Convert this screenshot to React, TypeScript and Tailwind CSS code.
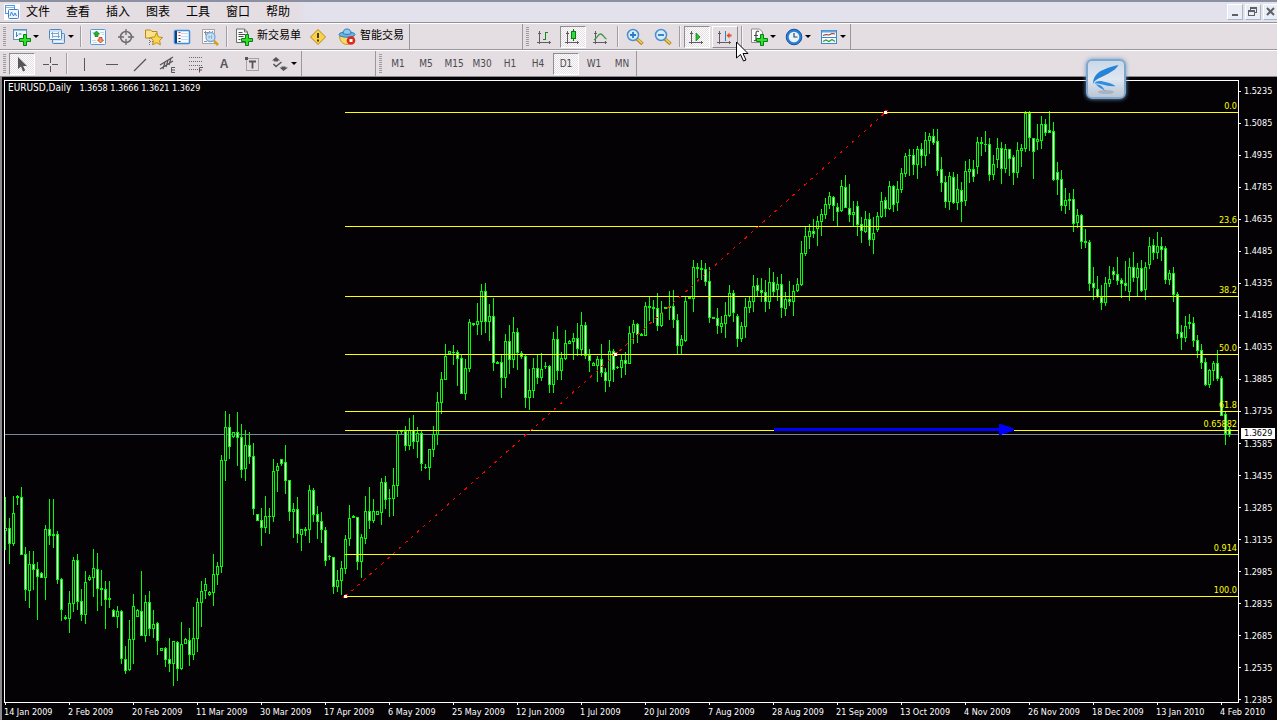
import React from "react";

type Candle = { high: number; top: number; bottom: number; low: number; down: boolean };

const STEP = 4;
const FIRST_X = 5;

/* high, body top, body bottom, low, direction (u = up, d = down); one entry per trading day */
const SERIES = `
497 528 530 549 u|518 528 543 563 d|496 513 543 545 u|495 496 497 504 u|487 497 554 554 d|547 554 589 600 d|551 564 590 607 u|551 564 569 589 d
562 569 576 619 d|572 573 577 577 d|525 529 577 599 u|499 529 535 544 d|499 534 535 547 u|531 534 579 583 d|578 579 609 620 d|615 617 618 619 u
591 603 618 632 u|557 560 603 611 u|554 560 601 609 d|589 601 614 620 d|571 582 614 623 u|575 577 579 580 u|549 568 577 596 u|553 569 588 610 d
570 588 589 605 u|581 589 599 628 d|581 598 599 607 u|609 610 616 616 d|606 611 616 627 u|610 611 658 663 d|646 659 670 673 d|620 639 669 670 u
594 606 639 663 u|609 610 616 616 u|571 611 635 635 d|595 602 635 641 u|591 602 628 635 d|610 624 628 637 u|622 623 640 654 d|648 648 650 650 u
647 648 659 666 d|638 659 663 671 d|641 641 663 685 u|641 642 668 680 d|622 644 668 669 u|638 639 643 643 u|628 640 654 665 d|607 638 654 659 u
598 602 638 651 u|581 591 602 626 u|578 584 590 598 u|591 592 594 595 u|554 574 592 605 u|562 566 574 584 u|455 460 566 572 u|411 427 460 480 u
414 427 446 458 d|432 432 436 437 u|412 432 437 465 d|424 437 469 477 d|430 445 468 480 u|432 445 456 463 d|443 456 508 514 d|514 514 520 520 d
508 520 527 545 d|496 516 527 532 u|508 516 516 533 u|459 471 516 521 u|463 466 470 491 u|459 459 463 465 d|445 462 480 493 d|480 480 511 520 d
503 509 511 537 u|497 509 533 542 d|529 529 534 550 u|527 529 530 535 u|485 490 529 542 u|488 490 514 521 d|506 514 521 538 d|512 521 529 542 d
527 530 560 565 d|555 556 556 559 u|557 557 586 593 d|570 580 586 591 u|561 568 580 594 u|535 539 568 573 u|505 518 538 545 u|515 516 517 517 u
517 517 561 569 d|534 537 561 577 u|496 511 538 543 u|487 511 520 528 d|499 511 520 522 u|511 511 514 514 u|478 482 512 524 u|476 482 499 508 d
489 498 498 516 u|468 485 498 515 u|431 434 485 496 u|430 431 431 433 u|426 431 445 450 d|418 430 445 449 u|415 430 441 448 d|427 433 441 457 u
430 433 463 470 d|464 467 467 468 u|449 449 467 479 u|426 434 449 456 u|392 402 434 444 u|372 379 402 413 u|344 356 379 379 u|351 351 353 353 u
345 352 352 364 u|350 352 358 385 d|355 358 393 393 d|359 368 393 399 u|319 322 368 371 u|323 323 324 325 u|303 321 324 334 u|284 291 321 334 u
283 291 321 332 d|304 316 321 340 u|298 316 362 370 d|361 362 363 363 u|354 362 377 397 d|334 341 377 387 u|325 341 359 373 d|317 332 359 367 u
328 332 352 369 d|351 353 356 358 d|355 356 397 407 d|369 390 397 409 u|358 368 390 397 u|354 368 377 383 d|353 369 377 380 u|362 366 366 368 u
365 366 384 392 d|332 339 384 392 u|326 339 370 379 d|352 358 370 379 u|330 343 358 359 u|340 341 343 343 u|333 338 341 359 u|323 338 348 355 d
312 325 349 355 u|322 325 355 358 d|349 355 360 371 d|362 363 365 365 u|356 359 365 381 u|344 359 372 376 d|368 372 380 391 d|340 351 380 386 u
349 351 369 381 d|366 367 367 368 u|355 360 367 377 u|352 360 363 374 d|326 333 363 363 u|320 324 332 343 u|323 324 334 342 d|333 334 335 335 u
302 306 335 335 u|297 306 307 320 u|300 307 308 322 u|293 308 325 330 d|301 313 325 326 u|307 307 308 308 u|291 306 307 319 u|290 306 319 327 d
314 320 345 353 d|335 339 345 353 u|296 301 340 341 u|297 297 298 298 u|260 267 298 311 u|263 267 268 277 u|260 268 269 279 u|263 269 281 285 d
267 281 317 322 d|317 317 318 318 u|308 318 325 333 d|316 323 326 332 u|302 315 323 337 u|285 293 315 316 u|290 293 312 321 d|314 316 338 346 d
322 326 338 341 u|298 307 326 337 u|296 301 307 312 u|275 286 301 311 u|278 285 290 296 d|278 290 292 301 d|280 292 301 311 d|268 282 301 308 u
272 282 291 296 d|277 284 289 300 u|274 284 307 317 d|292 299 308 315 u|281 299 301 305 d|285 291 301 315 u|278 284 290 291 u|241 253 284 285 u
227 236 253 255 u|224 231 236 248 u|219 231 233 237 d|216 221 228 245 u|209 214 221 235 u|198 204 214 218 u|192 196 204 208 u|196 197 205 220 d
203 207 211 225 d|180 186 210 211 u|175 187 207 207 d|184 208 214 221 d|201 212 214 225 u|201 206 224 235 d|217 224 230 242 d|211 219 231 232 u
213 219 239 245 d|217 233 239 253 u|212 216 229 231 u|192 201 216 217 u|197 200 208 216 d|181 186 208 209 u|185 186 204 211 d|181 189 202 210 u
168 173 189 192 u|153 156 173 176 u|149 155 155 175 u|149 155 164 174 d|146 149 164 178 u|143 149 155 167 d|132 140 155 165 u|133 136 140 153 u
129 136 142 144 d|129 141 170 175 d|157 169 182 191 d|176 182 201 207 d|172 176 201 209 u|172 177 202 203 d|174 189 202 209 u|182 190 201 221 d
161 171 200 205 u|159 169 171 182 u|160 169 176 181 d|137 142 166 173 u|137 142 143 155 u|131 144 144 151 u|138 144 174 180 d|155 164 174 179 u
138 148 159 167 u|142 148 168 183 d|144 149 168 172 u|149 149 158 175 d|155 157 172 184 d|142 150 172 177 u|144 148 150 166 u|111 113 148 151 u
111 113 137 150 d|138 138 151 178 d|124 139 141 149 u|116 124 140 148 u|119 124 132 135 d|111 130 132 132 d|122 131 179 180 d|162 172 179 194 d
170 179 205 210 d|188 200 205 213 u|193 199 200 209 u|189 199 223 231 d|209 215 222 227 u|214 215 241 248 d|229 241 242 247 u|240 242 283 290 d
267 283 287 299 d|276 289 296 297 d|285 297 302 309 d|277 283 302 305 u|266 279 283 286 u|267 271 274 279 d|257 274 280 284 d|278 280 283 297 d
261 283 285 290 d|258 267 291 300 u|252 267 277 281 d|263 268 277 295 u|260 268 290 291 d|262 267 289 299 u|237 246 264 268 u|239 245 252 259 d
232 246 252 258 u|237 246 249 260 d|246 248 279 283 d|270 273 279 284 u|267 273 294 301 d|292 294 333 338 d|325 332 337 349 d|316 326 337 341 u
314 322 323 328 u|317 323 340 346 d|335 340 350 357 d|344 350 362 368 d|358 362 384 385 d|369 370 384 387 u|361 363 370 380 u|350 363 378 380 d
376 378 415 415 d|411 414 433 444 d|427 429 434 436 d`;

const CANDLES: Candle[] = SERIES.trim()
  .split(/[|\n]/)
  .map((row) => {
    const [high, top, bottom, low, dir] = row.trim().split(" ");
    return { high: +high, top: +top, bottom: +bottom, low: +low, down: dir === "d" };
  });

const box = (x: number, y: number, w: number, h: number) => `M${x} ${y}h${w}v${h}h${-w}z`;

const LIME_PATH = CANDLES.map((c, i) => {
  const x = FIRST_X + i * STEP;
  return box(x, c.high, 1, c.low - c.high + 1) + box(x - 1, c.top, 3, c.bottom - c.top + 1);
}).join("");

const corePath = (down: boolean) =>
  CANDLES.map((c, i) =>
    c.down === down && c.bottom - c.top > 1
      ? box(FIRST_X + i * STEP, c.top + 1, 1, c.bottom - c.top - 1)
      : ""
  ).join("");

const UP_CORES = corePath(false);
const DOWN_CORES = corePath(true);

const PLOT = { left: 4, top: 80, width: 1235, height: 623 };

const LEVELS = [
  { label: "0.0", y: 112 },
  { label: "23.6", y: 226 },
  { label: "38.2", y: 296 },
  { label: "50.0", y: 354 },
  { label: "61.8", y: 411 },
  { label: "0.65882", y: 430 },
  { label: "0.914", y: 554 },
  { label: "100.0", y: 596 },
];

const PRICES = Array.from({ length: 20 }, (_, i) => (1.5235 - i * 0.015).toFixed(4));

const DATES = [
  "14 Jan 2009", "2 Feb 2009", "20 Feb 2009", "11 Mar 2009", "30 Mar 2009", "17 Apr 2009", "6 May 2009",
  "25 May 2009", "12 Jun 2009", "1 Jul 2009", "20 Jul 2009", "7 Aug 2009", "28 Aug 2009", "21 Sep 2009",
  "13 Oct 2009", "4 Nov 2009", "26 Nov 2009", "18 Dec 2009", "13 Jan 2010", "4 Feb 2010",
];

const MENUS = ["文件", "查看", "插入", "图表", "工具", "窗口", "帮助"];
const PERIODS = ["M1", "M5", "M15", "M30", "H1", "H4", "D1", "W1", "MN"];

/* ---------- icons ---------- */

function Icon({ children }: { children: React.ReactNode }) {
  return (
    <svg viewBox="0 0 18 18" className="h-[18px] w-[18px] shrink-0" fill="none" aria-hidden="true">
      {children}
    </svg>
  );
}

const Plus = () => (
  <path d="M10.500 6.500h3v4h4v3h-4v4h-3v-4h-4v-3h4z" fill="#2fe02f" stroke="#0b7d14" strokeWidth="1" />
);

const NewChartIcon = () => (
  <Icon>
    <rect x="0.5" y="1.5" width="13" height="10" fill="#f2f8fd" stroke="#5b93c4" />
    <path d="M1 2.5h12" stroke="#8fbbe0" />
    <path d="M3.5 4v5M5.5 6h3M3 7.5h2" stroke="#4d7ea8" />
    <Plus />
  </Icon>
);
const ProfilesIcon = () => (
  <Icon>
    <rect x="4.5" y="5.5" width="12" height="10" rx="1" fill="#cfe3f4" stroke="#4e88bd" />
    <rect x="1.5" y="1.5" width="12" height="10" rx="1" fill="#f2f8fd" stroke="#4e88bd" />
    <path d="M2 3h11" stroke="#a9cdec" />
    <path d="M4.500 4v6M10.500 4v6M3 5.500h8M4 8.500h8" stroke="#7fa9cc" />
    <path d="M6 13.500h9" stroke="#f4f9fd" />
  </Icon>
);
const MarketWatchIcon = () => (
  <Icon>
    <rect x="1.500" y="1.500" width="15" height="15" rx="1" fill="#f8fbfd" stroke="#4f9fdc" />
    <path d="M3 4.500h3M3 12.500h4M4 14.500h4M11 4.500h4M13 6.500h2" stroke="#c8d4de" />
    <path d="M7.500 3l3 3H9v2.500H6V6H4.500z" fill="#25b425" stroke="#0c7a12" strokeWidth="0.700" />
    <path d="M11.500 15l-3-3H10V9.500h3V12h1.500z" fill="#f4946c" stroke="#d2431b" strokeWidth="0.900" />
  </Icon>
);
const TargetIcon = () => (
  <Icon>
    <circle cx="9" cy="9" r="5.500" stroke="#6b6b70" strokeWidth="1.500" />
    <path d="M9 1v6M9 11v6M1 9h6M11 9h6" stroke="#6b6b70" strokeWidth="1.300" />
  </Icon>
);
const NavigatorIcon = () => (
  <Icon>
    <path d="M0.500 2h5l1.500 1.500h5V10H0.500z" fill="#fbe28a" stroke="#b58b1c" />
    <path d="M4.500 10v7M5 13.500h3" stroke="#777" strokeDasharray="1 1" />
    <path d="M11.500 5l2 4 4.200.5-3.100 3 .8 4.300-3.900-2.100-3.900 2.100.8-4.300-3-3 4.200-.5z" fill="#fbd650" stroke="#b8860b" strokeWidth="0.900" />
  </Icon>
);
const DataWindowIcon = () => (
  <Icon>
    <rect x="1.500" y="2.500" width="15" height="13" rx="1" fill="#f7fbff" stroke="#3e8fd6" strokeWidth="1.500" />
    <path d="M3 3v12" stroke="#123e78" strokeWidth="2" />
    <path d="M8 5.500h7M8 8.500h7M8 11.500h7" stroke="#c6dcee" />
    <path d="M5.500 4.500h2M5.500 7.500h2" stroke="#ee3030" />
    <path d="M5.500 10.500h2M5.500 13.500h2" stroke="#333" />
  </Icon>
);
const TesterIcon = () => (
  <Icon>
    <rect x="1.500" y="1.500" width="12" height="14" fill="#fafafa" stroke="#a5a5aa" />
    <path d="M3 4.500h9M4.500 3v4M8.500 3v3M11.500 3v3M3 13.500h3" stroke="#8d8d92" />
    <circle cx="9.500" cy="9" r="4.500" fill="#c9e4f8" stroke="#7ba9d2" strokeWidth="1.300" />
    <path d="M8 7.500v3M10.500 7v4M7.500 9h4" stroke="#8fb6d8" />
    <path d="M13 13l4 4" stroke="#d3a11d" strokeWidth="2.500" />
  </Icon>
);
const NewOrderIcon = () => (
  <Icon>
    <path d="M1.500 1h8l3 3v10.500h-11z" fill="#fbfbfb" stroke="#66706a" />
    <path d="M9.500 1v3h3" stroke="#66706a" />
    <path d="M3.500 4.500h4M3.500 6.500h6.500M3.500 8.500h5M3.500 11.500h2" stroke="#4b4b50" />
    <Plus />
  </Icon>
);
const WarnIcon = () => (
  <Icon>
    <path d="M9 1.500l7.500 7.500L9 16.500 1.500 9z" fill="#f9d34b" stroke="#b88a12" strokeLinejoin="round" />
    <path d="M9 5v5M9 11.500v2" stroke="#4c3c08" strokeWidth="2" />
  </Icon>
);
const ExpertIcon = () => (
  <Icon>
    <path d="M1.500 8c0 5 3.500 8.500 7.500 8.500s6.500-3 6.500-8.500z" fill="#f7d765" stroke="#c09a2a" />
    <ellipse cx="9" cy="6.500" rx="8" ry="2.700" fill="#6db3e2" stroke="#2e7db6" />
    <path d="M5 5.500c0-3 1.500-4.500 4-4.500s4 1.500 4 4.500c-2 1.200-6 1.200-8 0z" fill="#8ccaf0" stroke="#2e7db6" />
    <circle cx="13" cy="12.500" r="4.300" fill="#dc2a1c" />
    <rect x="11.500" y="11" width="3" height="3" fill="#fff" />
  </Icon>
);

const Axes = () => (
  <g stroke="#5d5d62">
    <path d="M3.500 3v13M1 14.500h14" />
    <path d="M2 5.500h3M13.500 13v3" />
  </g>
);
const BarsIcon = () => (
  <Icon>
    <Axes />
    <path d="M9.500 4v8M7 11.500h2.500M9.500 4.500H12" stroke="#168a1c" />
  </Icon>
);
const CandlesIcon = () => (
  <Icon>
    <Axes />
    <path d="M9.500 1v12" stroke="#0b6e12" />
    <rect x="7.500" y="3.500" width="4" height="7" fill="#2edc36" stroke="#0b7d14" />
  </Icon>
);
const LineIcon = () => (
  <Icon>
    <Axes />
    <path d="M2 12c3-1.500 4-6 6.500-6s3 3.500 6 5" stroke="#3a9a44" strokeWidth="1.300" />
  </Icon>
);
const Lens = ({ plus }: { plus?: boolean }) => (
  <Icon>
    <path d="M11 11l5.500 5" stroke="#b78a1c" strokeWidth="3.500" />
    <path d="M11.500 11l4.500 4.300" stroke="#f5d260" strokeWidth="1.500" />
    <circle cx="7" cy="7" r="5.500" fill="#d4ecfb" stroke="#4a90cc" strokeWidth="1.500" />
    <path d={plus ? "M7 4v6M4 7h6" : "M4 7h6"} stroke="#2d7ac0" strokeWidth="1.800" />
  </Icon>
);
const AutoScrollIcon = () => (
  <Icon>
    <Axes />
    <path d="M8 5l4 4-4 4z" fill="#27c42f" stroke="#0b7d14" strokeWidth="0.700" />
  </Icon>
);
const ShiftIcon = () => (
  <Icon>
    <Axes />
    <path d="M9.500 3v10" stroke="#2f7fc8" />
    <path d="M10.500 7.500l3-3v2h2v2h-2v2z" fill="#e2502a" />
  </Icon>
);
const IndicatorIcon = () => (
  <Icon>
    <path d="M1.500 1h8l3 3v10.500h-11z" fill="#fbfbfb" stroke="#8b8b90" />
    <path d="M9 3.500c-2-1-3 0-3 2v6c0 1-1 1.500-2 1M4 7.500h4" stroke="#4b4b50" strokeWidth="1.200" />
    <Plus />
  </Icon>
);
const ClockIcon = () => (
  <Icon>
    <circle cx="9" cy="9" r="7.800" fill="#2c7fd6" stroke="#1655a0" />
    <circle cx="9" cy="9" r="5.300" fill="#e9f4fc" />
    <path d="M9 5v4h3.500" stroke="#3b4a5c" strokeWidth="1.200" />
  </Icon>
);
const TemplateIcon = () => (
  <Icon>
    <rect x="1.500" y="2.500" width="15" height="13" fill="#f6fbff" stroke="#3f87c6" />
    <path d="M2 3.500h14" stroke="#62a6e2" strokeWidth="2" />
    <path d="M2 9.500h14" stroke="#3f87c6" />
    <path d="M3 7.500l3-1 3 .5 3-1.500 3 .5" stroke="#a8322a" strokeWidth="1.200" />
    <path d="M3 13.500l3-1.500 3 1.500 3-2 3 2" stroke="#2f9a3a" strokeWidth="1.200" />
  </Icon>
);

const PointerIcon = () => (
  <Icon>
    <path d="M5 2v12l3-2.500 2 5 2.200-1-2-4.500H14z" fill="#55555a" />
  </Icon>
);
const CrossIcon = () => (
  <Icon>
    <path d="M9.500 2v6M9.500 11v6M2 9.500h6M11 9.500h6" stroke="#55555a" />
  </Icon>
);
const VLineIcon = () => (
  <Icon>
    <path d="M9.500 3v13" stroke="#55555a" />
  </Icon>
);
const HLineIcon = () => (
  <Icon>
    <path d="M3 9.500h12" stroke="#55555a" />
  </Icon>
);
const TrendIcon = () => (
  <Icon>
    <path d="M3 16L15 4" stroke="#55555a" strokeWidth="1.200" />
  </Icon>
);
const ChannelIcon = () => (
  <Icon>
    <path d="M1 10L14 2M1 14L14 6M4 14l2-7M7 12l2-7M10 10l2-7" stroke="#55555a" strokeWidth="1.200" />
    <path d="M16 12.500h-3.500v5H16M12.500 15H16" stroke="#55555a" />
  </Icon>
);
const FiboIcon = () => (
  <Icon>
    <path d="M2 2.500h14M2 6.500h14M2 10.500h14M2 14.500h9" stroke="#66666b" strokeDasharray="1 1" />
    <path d="M16 12.500h-3.500v5M12.500 15H15" stroke="#55555a" />
  </Icon>
);
const LabelIcon = () => (
  <Icon>
    <rect x="3.500" y="3.500" width="12" height="12" stroke="#66666b" strokeDasharray="1 1" />
    <path d="M6 6.500h7M9.500 6.500v7" stroke="#55555a" strokeWidth="1.800" />
    <rect x="2" y="2" width="3" height="3" fill="#55555a" />
  </Icon>
);
const ArrowsIcon = () => (
  <Icon>
    <path d="M5 2l4 3.500H7v1H3v-1H1z" fill="#55555a" />
    <path d="M2.500 9l2.500 2.500 5.500-4.500" stroke="#55555a" strokeWidth="1.500" />
    <path d="M12.500 16l-4-3.500h2v-1h4v1h2.500z" fill="#55555a" />
  </Icon>
);

const AppIcon = () => (
  <svg viewBox="0 0 16 16" className="h-4 w-4" fill="none" aria-hidden="true">
    <path d="M0 0h16v16H0z" fill="#fdfdff" />
    <rect x="1.500" y="1.500" width="9" height="8" stroke="#5a96da" />
    <rect x="4.500" y="5.500" width="10" height="9" rx="1" fill="#eef6ff" stroke="#3f80cf" />
    <path d="M2 3.500h8" stroke="#8cb9ea" />
    <path d="M6 12l1.500-4 2 4 1.500-3 1.500 3" stroke="#3f80cf" />
  </svg>
);

/* ---------- toolbar parts ---------- */

const Grip = () => (
  <span className="my-[3px] ml-[3px] mr-[2px] w-[3px] self-stretch bg-[repeating-linear-gradient(to_bottom,#9c999f_0_1px,transparent_1px_2px)]" />
);
const Divider = () => <span className="mx-[2px] my-[2px] w-[2px] self-stretch border-l border-l-[#a09da3] border-r border-r-[#f4f1f4]" />;

const CHECKER = "bg-[conic-gradient(#fff_25%,#e4dde2_0_50%,#fff_0_75%,#e4dde2_0)] bg-[length:2px_2px]";

function Tool({ label, pressed, raised, children }: { label: string; pressed?: boolean; raised?: boolean; children: React.ReactNode }) {
  const look = pressed
    ? `border-t-[#8f8c92] border-l-[#8f8c92] border-b-white border-r-white ${CHECKER}`
    : raised
    ? "border-t-white border-l-white border-b-[#8f8c92] border-r-[#8f8c92]"
    : "border-transparent";
  return (
    <button type="button" aria-label={label} aria-pressed={pressed} className={`mx-px flex h-[22px] w-[26px] items-center justify-center border ${look}`}>
      {children}
    </button>
  );
}

function DropTool({ label, children }: { label: string; children: React.ReactNode }) {
  return (
    <button type="button" aria-label={label} className="flex h-[22px] w-[35px] items-center justify-center gap-[2px]">
      {children}
      <span className="border-x-[3px] border-t-[3px] border-x-transparent border-t-black" />
    </button>
  );
}

function Band({ children }: { children: React.ReactNode }) {
  return <div className="flex items-center border-r border-[#9a979d]">{children}</div>;
}

/* ---------- chart ---------- */

const Anchor = ({ x, y }: { x: number; y: number }) => (
  <g>
    <path d={`M${x - 2} ${y}h1v2h-1zM${x} ${y - 2}h3v1h-3zM${x + 2} ${y + 1}h1v1h-1z`} fill="#ff0000" />
    <rect x={x - 1} y={y - 1} width="3" height="3" fill="#fff" />
  </g>
);

function Plot() {
  return (
    <svg
      viewBox={`${PLOT.left} ${PLOT.top} ${PLOT.width} ${PLOT.height}`}
      preserveAspectRatio="none"
      shapeRendering="crispEdges"
      className="block h-full w-full"
      role="img"
      aria-label="EURUSD daily candlestick chart"
    >
      <rect x="5" y="434" width="1233" height="1" fill="#778899" />
      <path d={LIME_PATH} fill="#00ff00" />
      <path d={UP_CORES} fill="#040205" />
      <path d={DOWN_CORES} fill="#fff" />
      {LEVELS.map((l) => (
        <rect key={l.label} x="345" y={l.y} width="893" height="1" fill="#ffff00" />
      ))}
      <path d="M345.500 596.500L885.500 112.500" stroke="#ff0000" strokeDasharray="3 5" />
      <Anchor x={345} y={596} />
      <Anchor x={615} y={354} />
      <Anchor x={885} y={112} />
      <path d="M774 428h225v-4h3v1h3v1h3v1h3v1h2v1h1v2h-3v1h-3v1h-3v1h-3v1h-3v-4h-225z" fill="#0000ff" />
      <path d="M4 80h1235v623H4zM5 81v621h1233V81z" fill="#fff" fillRule="evenodd" />
    </svg>
  );
}

function WindowButton({ label, children }: { label: string; children: React.ReactNode }) {
  return (
    <button
      type="button"
      aria-label={label}
      className="h-4 w-4 border border-t-white border-l-white border-b-[#a9b6c6] border-r-[#a9b6c6] bg-[#e9edf5]"
    >
      <svg viewBox="0 0 14 14" className="h-[14px] w-[14px]" fill="none" shapeRendering="crispEdges" aria-hidden="true">
        {children}
      </svg>
    </button>
  );
}

export default function App() {
  return (
    <div className="relative flex h-screen flex-col overflow-hidden bg-[#e4dde2] font-['DejaVu_Sans_Condensed','Noto_Sans','Noto_Sans_CJK_SC',sans-serif] text-black">
      <header className="flex h-[23px] items-center border-t-2 border-b border-t-[#8b90a2] border-b-[#8f9098] bg-linear-to-r from-[#e4dde2] from-23% to-[#e3e1ec] to-24% pl-1">
        <AppIcon />
        <nav className="ml-[-2px] flex">
          {MENUS.map((m) => (
            <button key={m} type="button" className="px-2 pb-[2px] font-['Noto_Sans_CJK_SC',sans-serif] text-[12px] leading-[18px]">
              {m}
            </button>
          ))}
        </nav>
        <div className="-mr-0.5 ml-auto flex gap-[2px]">
          <WindowButton label="最小化">
            <path d="M4 9h6v2H4z" fill="#5f6066" />
          </WindowButton>
          <WindowButton label="还原">
            <path d="M4 2h7v6H9V7h1V4H5v1H4zM2 5h7v6H2zM3 7v3h5V7z" fill="#5f6066" fillRule="evenodd" />
          </WindowButton>
          <WindowButton label="关闭">
            <path d="M3 3l7 7M10 3l-7 7" stroke="#5f6066" strokeWidth="2" shapeRendering="auto" />
          </WindowButton>
        </div>
      </header>

      <div className="flex h-[27px] items-stretch border-t border-b border-t-white border-b-[#9a979d]" role="toolbar" aria-label="标准">
        <Band>
          <Grip />
          <DropTool label="新图表"><NewChartIcon /></DropTool>
          <DropTool label="配置文件"><ProfilesIcon /></DropTool>
          <Divider />
          <Tool label="市场报价"><MarketWatchIcon /></Tool>
          <Tool label="数据窗口"><TargetIcon /></Tool>
          <Tool label="导航器"><NavigatorIcon /></Tool>
          <Tool label="终端"><DataWindowIcon /></Tool>
          <Tool label="策略测试"><TesterIcon /></Tool>
          <Divider />
          <button type="button" className="flex items-center gap-1 pl-[5px] pr-[3px] text-[11px] leading-4">
            <NewOrderIcon />
            <span className="pb-[2px]">新交易单</span>
          </button>
          <Tool label="编辑器"><WarnIcon /></Tool>
          <button type="button" className="flex items-center gap-1 pl-1.5 pr-[5px] text-[11px] leading-4">
            <ExpertIcon />
            <span className="pb-[2px]">智能交易</span>
          </button>
        </Band>
        <div className="ml-28 flex border-l border-[#9a979d]">
          <Band>
            <Grip />
            <Tool label="柱状图"><BarsIcon /></Tool>
            <Tool label="蜡烛图" pressed><CandlesIcon /></Tool>
            <Tool label="折线图"><LineIcon /></Tool>
            <Divider />
            <Tool label="放大"><Lens plus /></Tool>
            <Tool label="缩小"><Lens /></Tool>
            <Divider />
            <Tool label="自动滚动" pressed><AutoScrollIcon /></Tool>
            <Tool label="图表平移" raised><ShiftIcon /></Tool>
            <Divider />
            <DropTool label="技术指标"><IndicatorIcon /></DropTool>
            <DropTool label="时间周期"><ClockIcon /></DropTool>
            <DropTool label="模板"><TemplateIcon /></DropTool>
          </Band>
        </div>
      </div>

      <div className="flex h-[27px] items-stretch border-t border-b border-t-white border-b-[#8b888e]" role="toolbar" aria-label="画线工具">
        <Band>
          <Grip />
          <Tool label="光标" pressed><PointerIcon /></Tool>
          <Tool label="十字准线"><CrossIcon /></Tool>
          <Divider />
          <Tool label="垂直线"><VLineIcon /></Tool>
          <Tool label="水平线"><HLineIcon /></Tool>
          <Tool label="趋势线"><TrendIcon /></Tool>
          <Tool label="等距通道"><ChannelIcon /></Tool>
          <Tool label="斐波纳契回调线"><FiboIcon /></Tool>
          <Tool label="文字">
            <span className="font-['Liberation_Sans',sans-serif] text-[12px] font-bold leading-4 text-[#55555a]">A</span>
          </Tool>
          <Tool label="文字标签"><LabelIcon /></Tool>
          <DropTool label="箭头"><ArrowsIcon /></DropTool>
        </Band>
        <div className="ml-[73px] flex border-l border-[#9a979d]">
          <Band>
            <Grip />
            {PERIODS.map((p) => (
              <Tool key={p} label={p} pressed={p === "D1"}>
                <span className="text-[10px] leading-4 text-[#4c4a4f]">{p}</span>
              </Tool>
            ))}
          </Band>
        </div>
      </div>

      <main className="flex min-h-0 flex-1 flex-col border-l-2 border-[#8b888e] bg-[#040205] pl-[2px] pt-[3px] text-[9px] leading-[14px] text-white">
        <div className="grid min-h-0 flex-1 grid-cols-[minmax(0,1fr)_38px] grid-rows-[minmax(0,1fr)]">
          <div className="relative min-h-0">
            <Plot />
            <p className="absolute left-1 top-px flex items-baseline gap-2 whitespace-nowrap">
              <span className="text-[10px]">EURUSD,Daily</span>
              <span>1.3658 1.3666 1.3621 1.3629</span>
            </p>
            {LEVELS.map((l) => (
              <span
                key={l.label}
                className="absolute right-[2px] -translate-y-full leading-[11px] text-[#ffff00]"
                style={{ top: `${((l.y - PLOT.top) / PLOT.height) * 100}%` }}
              >
                {l.label}
              </span>
            ))}
          </div>
          <div className="relative -mb-1 mt-1 flex flex-col justify-between">
            {PRICES.map((p) => (
              <div key={p} className="flex h-[14px] items-center gap-[3px]">
                <span className="h-px w-[2px] bg-white" />
                {p}
              </div>
            ))}
            <span
              className="absolute left-[2px] h-[11px] w-[34px] bg-white pl-[3px] leading-[11px] text-black"
              style={{ top: `${((428 - 84) / PLOT.height) * 100}%` }}
            >
              1.3629
            </span>
          </div>
        </div>
        <div className="flex h-[17px] pr-[39px]">
          {DATES.map((d, i) => (
            <div key={d} className={i < DATES.length - 1 ? "min-w-0 flex-1 whitespace-nowrap" : "w-[18px] whitespace-nowrap"}>
              <span className="ml-px block h-[2px] w-px bg-white" />
              {d}
            </div>
          ))}
        </div>
      </main>

      <div className="absolute right-[151px] top-[59px] h-10 w-10 rounded-md border-2 border-[#7fa6cc] bg-linear-to-b from-[#c9d8e8] via-[#dfe7f0] to-[#b9c6d6] shadow-[0_0_4px_#6f9cc6]">
        <svg viewBox="0 0 36 36" className="h-9 w-9" aria-hidden="true">
          <ellipse cx="18" cy="31" rx="8" ry="2" fill="#8b98a8" opacity="0.5" />
          <path d="M30.500 4C21 6 12 9 8 14c-2.500 3-3 6-3 9 1-2 2-3.500 4.500-5 3-1.800 7-3.200 11-5.500C25 10 28.500 7.500 30.500 4z" fill="#2583d8" />
          <path d="M6.500 22.500C8 20 11 19.500 15 20.500c4.500 1.200 8.500 1.500 12.500 4.500-5 .8-9-.2-12-1.200-3.200-1-6-1.300-9-1.300z" fill="#2f8ee0" />
          <path d="M7.500 23.500c4-.5 8 2 9.500 7-1.500-2.200-4-3-5.500-4s-2-2-4-3z" fill="#2f8ee0" />
        </svg>
      </div>

      <svg viewBox="0 0 13 21" className="absolute left-[736px] top-[41px] h-[21px] w-[13px]" aria-hidden="true">
        <path d="M0.500 1v16l4-3.500 3 6.500 2.500-1-3-6.500h5z" fill="#fff" stroke="#000" />
      </svg>
    </div>
  );
}
